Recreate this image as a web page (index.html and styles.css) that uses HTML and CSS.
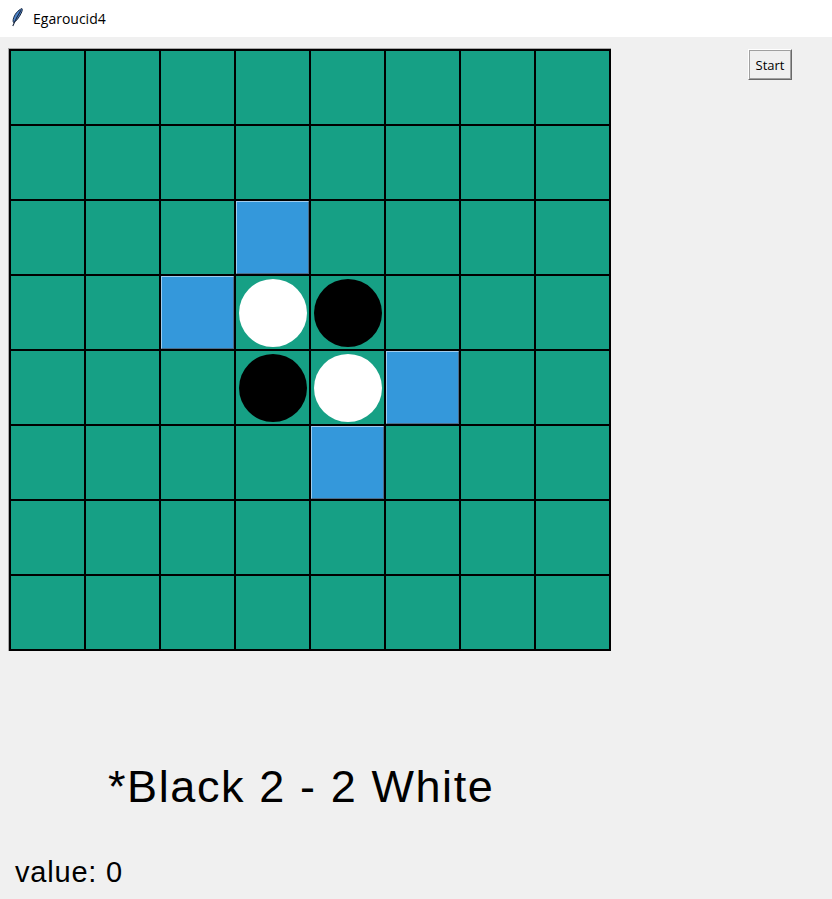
FILE: index.html
```html
<!DOCTYPE html>
<html>
<head>
<meta charset="utf-8">
<link rel="stylesheet" href="styles.css">
</head>
<body>
<div class="titlebar">
  <svg class="feather" width="12" height="19" viewBox="0 0 12 19">
    <path d="M11 0.6 C7 2 3.2 6.5 2.2 11.5 C1.9 13 2.1 14 2.6 14.6 C5 13.4 8.2 9.5 10.2 5.2 C11.3 3 11.6 1.4 11 0.6 Z" fill="#4f86cc" stroke="#1b2940" stroke-width="1"/>
    <path d="M10 2.2 C7.5 6 5 10.5 1.8 18" fill="none" stroke="#1b2940" stroke-width="1.1"/>
  </svg>
  <span class="title">Egaroucid4</span>
</div>
<div class="main">
  <div class="top">
    <div class="board-frame">
      <div class="board" id="board"></div>
    </div>
    <div class="side">
      <button class="start">Start</button>
    </div>
  </div>
  <div class="score">*Black 2 - 2 White</div>
  <div class="value">value: 0</div>
</div>
<script>
  var b = document.getElementById('board');
  var legal = {'2,3':1,'3,2':1,'4,5':1,'5,4':1};
  var discs = {'3,3':'white','3,4':'black','4,3':'black','4,4':'white'};
  for (var r = 0; r < 8; r++) {
    for (var c = 0; c < 8; c++) {
      var d = document.createElement('div');
      var k = r + ',' + c;
      d.className = 'cell' + (legal[k] ? ' legal' : '');
      if (discs[k]) {
        var s = document.createElement('div');
        s.className = 'disc ' + discs[k];
        d.appendChild(s);
      }
      b.appendChild(d);
    }
  }
</script>
</body>
</html>
```
FILE: styles.css
```css
html, body {
  margin: 0;
  padding: 0;
}
body {
  width: 832px;
  height: 899px;
  background: #f0f0f0;
  font-family: "Liberation Sans", Arial, sans-serif;
  overflow: hidden;
}
.titlebar {
  height: 37px;
  background: #ffffff;
  display: flex;
  align-items: center;
  padding-left: 11px;
  box-sizing: border-box;
}
.feather {
  display: block;
  margin-top: -2px;
}
.title {
  font-family: "Open Sans", "Liberation Sans", sans-serif;
  font-size: 14px;
  color: #000;
  margin-left: 10px;
  margin-top: -1px;
}
.main {
  display: flex;
  flex-direction: column;
}
.top {
  display: flex;
  padding-top: 11px;
  padding-left: 8px;
}
.board-frame {
  border: 1px solid #a8a8a8;
  border-right: none;
  border-bottom: none;
  width: 602px;
  height: 602px;
}
.board {
  display: grid;
  grid-template-columns: repeat(8, 73px);
  grid-template-rows: repeat(8, 73px);
  gap: 2px;
  padding: 2px;
  background: #000;
  width: 602px;
  height: 602px;
  box-sizing: border-box;
}
.cell {
  background: #16a085;
  display: flex;
  align-items: center;
  justify-content: center;
}
.cell.legal {
  background: #3498db;
  border-top: 1px solid #9fcdee;
  border-left: 1px solid #9fcdee;
  border-right: 1px solid #4a6f8c;
  border-bottom: 1px solid #4a6f8c;
  box-sizing: border-box;
}
.disc {
  width: 68px;
  height: 68px;
  border-radius: 50%;
}
.disc.white { background: #ffffff; }
.disc.black { background: #000000; }
.side {
  flex: 1;
  display: flex;
  justify-content: flex-end;
  padding-right: 40px;
}
.start {
  width: 44px;
  height: 31px;
  margin-top: 1px;
  padding: 0;
  font-family: "Open Sans", "Liberation Sans", sans-serif;
  font-size: 13px;
  color: #000;
  background: #f0f0f0;
  border: 1px solid;
  border-color: #ffffff #696969 #696969 #ffffff;
  box-shadow: 1px 1px 0 #a0a0a0 inset, -1px -1px 0 #a0a0a0 inset;
}
.score {
  margin-top: 110px;
  padding-left: 108px;
  font-size: 45px;
  letter-spacing: 1.6px;
  line-height: 52px;
  color: #000;
}
.value {
  margin-top: 42px;
  padding-left: 15px;
  font-size: 29px;
  letter-spacing: 0.8px;
  line-height: 34px;
  color: #000;
}
```
